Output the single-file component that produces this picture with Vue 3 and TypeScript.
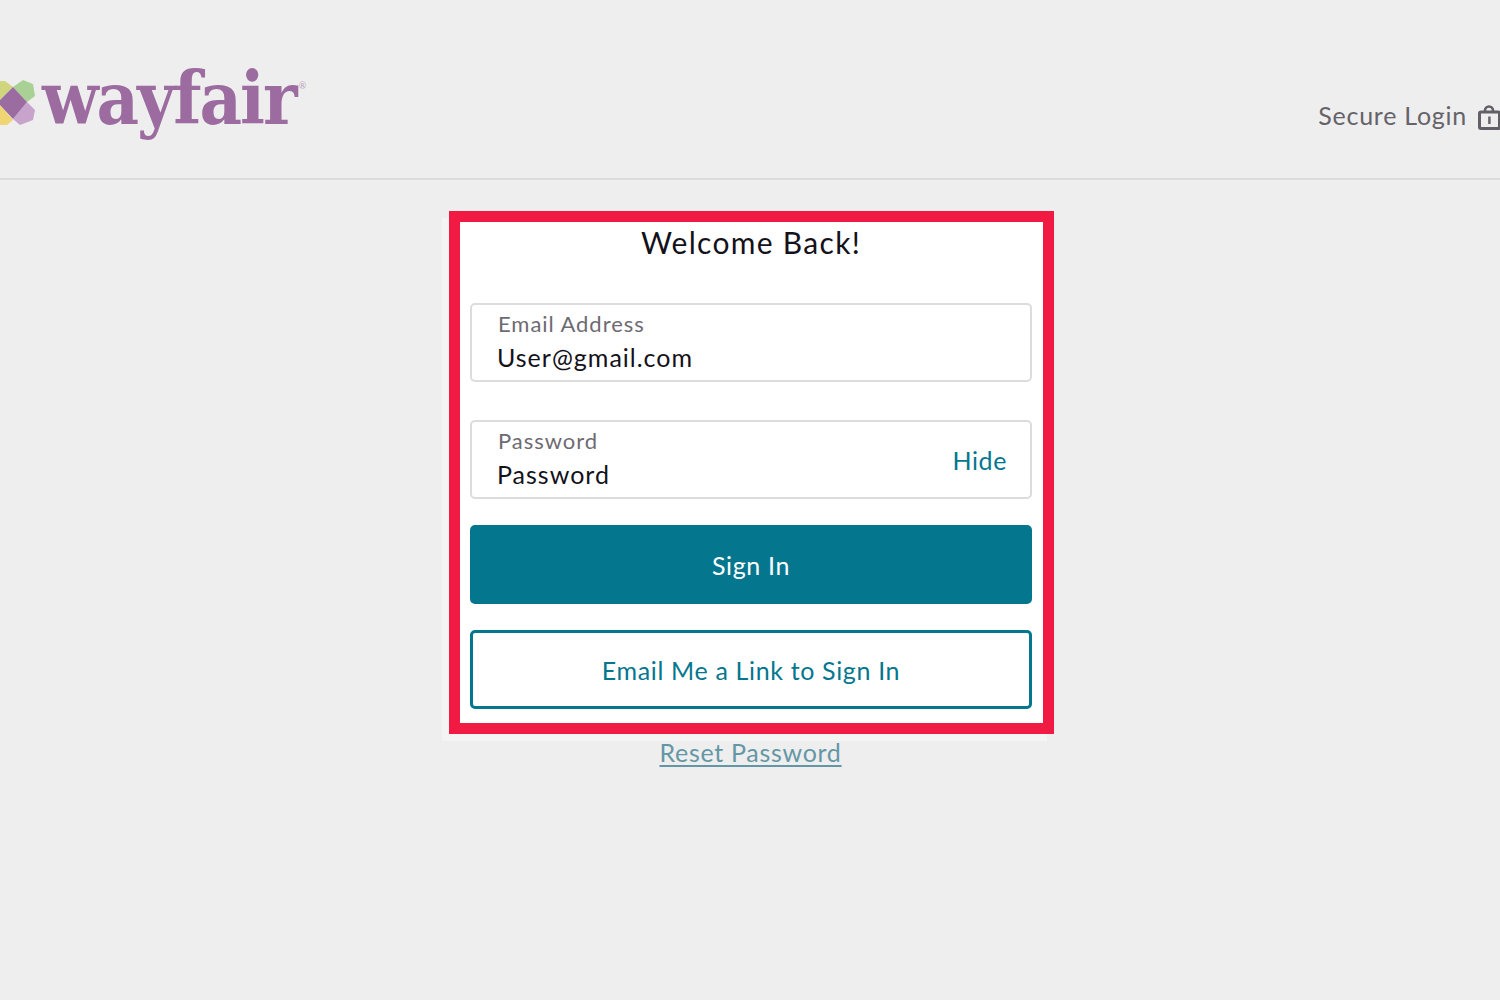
<script setup lang="ts">
const email = 'User@gmail.com'
const password = 'Password'
</script>

<template>
  <div class="page">
    <header class="top">
      <div class="brand">
        <svg class="mark" width="37" height="56" viewBox="0 0 37 56">
          <polygon points="0,11 5,11 13,17 0,30" fill="#cfd67e" />
          <polygon points="23,10 33,14 35,26 27,32 13,17" fill="#a9d095" />
          <polygon points="0,35 13,50 7,55 0,55" fill="#efd672" />
          <polygon points="27,32 35,40 33,50 20,55 13,49" fill="#c8a3cc" />
          <polygon points="13,17 27,32 13,49 0,35 0,30" fill="#9b6c9f" />
        </svg>
        <span class="logo">wayfair</span>
        <span class="reg">®</span>
      </div>
      <div class="secure">
        <span>Secure Login</span>
        <svg class="lock" width="24" height="26" viewBox="0 0 24 26">
          <path d="M7 7V5.5a4 4 0 0 1 8 0V7" fill="none" stroke="#635f66" stroke-width="2.6" />
          <rect x="1.5" y="7" width="20" height="16.5" rx="1.5" fill="none" stroke="#635f66" stroke-width="3" />
          <rect x="10.2" y="11.5" width="2.4" height="7.5" fill="#635f66" />
        </svg>
      </div>
    </header>

    <main class="content">
      <div class="panel">
        <div class="backing"></div>
        <form class="card" @submit.prevent>
          <h1>Welcome Back!</h1>
          <div class="field first">
            <div class="field-text">
              <label>Email Address</label>
              <div class="value">{{ email }}</div>
            </div>
          </div>
          <div class="field second">
            <div class="field-text">
              <label>Password</label>
              <div class="value">{{ password }}</div>
            </div>
            <a class="hide">Hide</a>
          </div>
          <button class="btn primary" type="button">Sign In</button>
          <button class="btn outline" type="button">Email Me a Link to Sign In</button>
        </form>
      </div>
      <a class="reset">Reset Password</a>
    </main>
  </div>
</template>

<style>
html,
body {
  margin: 0;
  background: #eeeeee;
}
</style>

<style scoped>
.page {
  width: 1500px;
  height: 1000px;
  overflow: hidden;
  background: #eeeeee;
  font-family: Lato, "Liberation Sans", sans-serif;
}

.top {
  height: 178px;
  border-bottom: 2px solid #dcdcdc;
  display: flex;
  justify-content: space-between;
}

.brand {
  display: flex;
  align-items: flex-start;
  padding-top: 68px;
}

.mark {
  margin-top: 2px;
  margin-right: 5px;
}

.logo {
  font-family: "DejaVu Serif Condensed", "DejaVu Serif", serif;
  font-weight: 700;
  font-size: 73px;
  line-height: 60px;
  letter-spacing: -2px;
  color: #9c6ba0;
}

.reg {
  font-size: 9px;
  line-height: 12px;
  margin-top: 12px;
  margin-left: 3px;
  color: #b9a3bb;
}

.secure {
  display: flex;
  align-items: flex-start;
  gap: 11px;
  padding-top: 99px;
  margin-right: -2px;
  font-size: 25px;
  line-height: 32px;
  letter-spacing: 0.75px;
  color: #66626a;
}

.lock {
  margin-top: 6px;
}

.content {
  display: flex;
  flex-direction: column;
  align-items: center;
  padding-top: 31px;
  padding-left: 3px;
}

.panel {
  position: relative;
}

/* faint sheet peeking out from behind the highlight box */
.backing {
  position: absolute;
  left: -7px;
  right: 7px;
  top: 7px;
  bottom: -7px;
  background: #f4f4f4;
}

.card {
  position: relative;
  width: 605px;
  height: 523px;
  box-sizing: border-box;
  border: 11px solid #f11a42;
  background: #fff;
  padding: 0 11px 0 10px;
}

h1 {
  margin: 0;
  height: 81px;
  font-size: 30px;
  line-height: 40px;
  font-weight: 400;
  letter-spacing: 1.3px;
  text-align: center;
  color: #14111a;
}

.field {
  height: 79px;
  box-sizing: border-box;
  border: 2px solid #dcdcdc;
  border-radius: 5px;
  display: flex;
  align-items: center;
  justify-content: space-between;
  padding: 0 23px 1px 26px;
}

.second {
  margin-top: 38px;
}

.field-text {
  display: flex;
  flex-direction: column;
}

label {
  font-size: 22px;
  line-height: 28px;
  letter-spacing: 0.95px;
  color: #6e6a72;
}

.value {
  margin-top: 2px;
  margin-left: -1px;
  font-size: 25px;
  line-height: 34px;
  letter-spacing: 1px;
  color: #14111a;
}

.hide {
  margin-top: 2px;
  font-size: 25px;
  letter-spacing: 0.6px;
  color: #04778f;
}

.btn {
  display: block;
  width: 100%;
  height: 79px;
  box-sizing: border-box;
  border-radius: 5px;
  font-family: inherit;
  font-size: 25px;
  letter-spacing: 0.65px;
}

.primary {
  margin-top: 26px;
  border: 0;
  background: #04778f;
  color: #fff;
}

.outline {
  margin-top: 26px;
  border: 3px solid #04778f;
  background: #fff;
  color: #04778f;
}

.reset {
  margin-top: 1px;
  margin-left: -2px;
  font-size: 25px;
  line-height: 34px;
  letter-spacing: 0.7px;
  text-decoration: underline;
  text-underline-offset: 3px;
  text-decoration-thickness: 2px;
  color: #6497a5;
}
</style>
